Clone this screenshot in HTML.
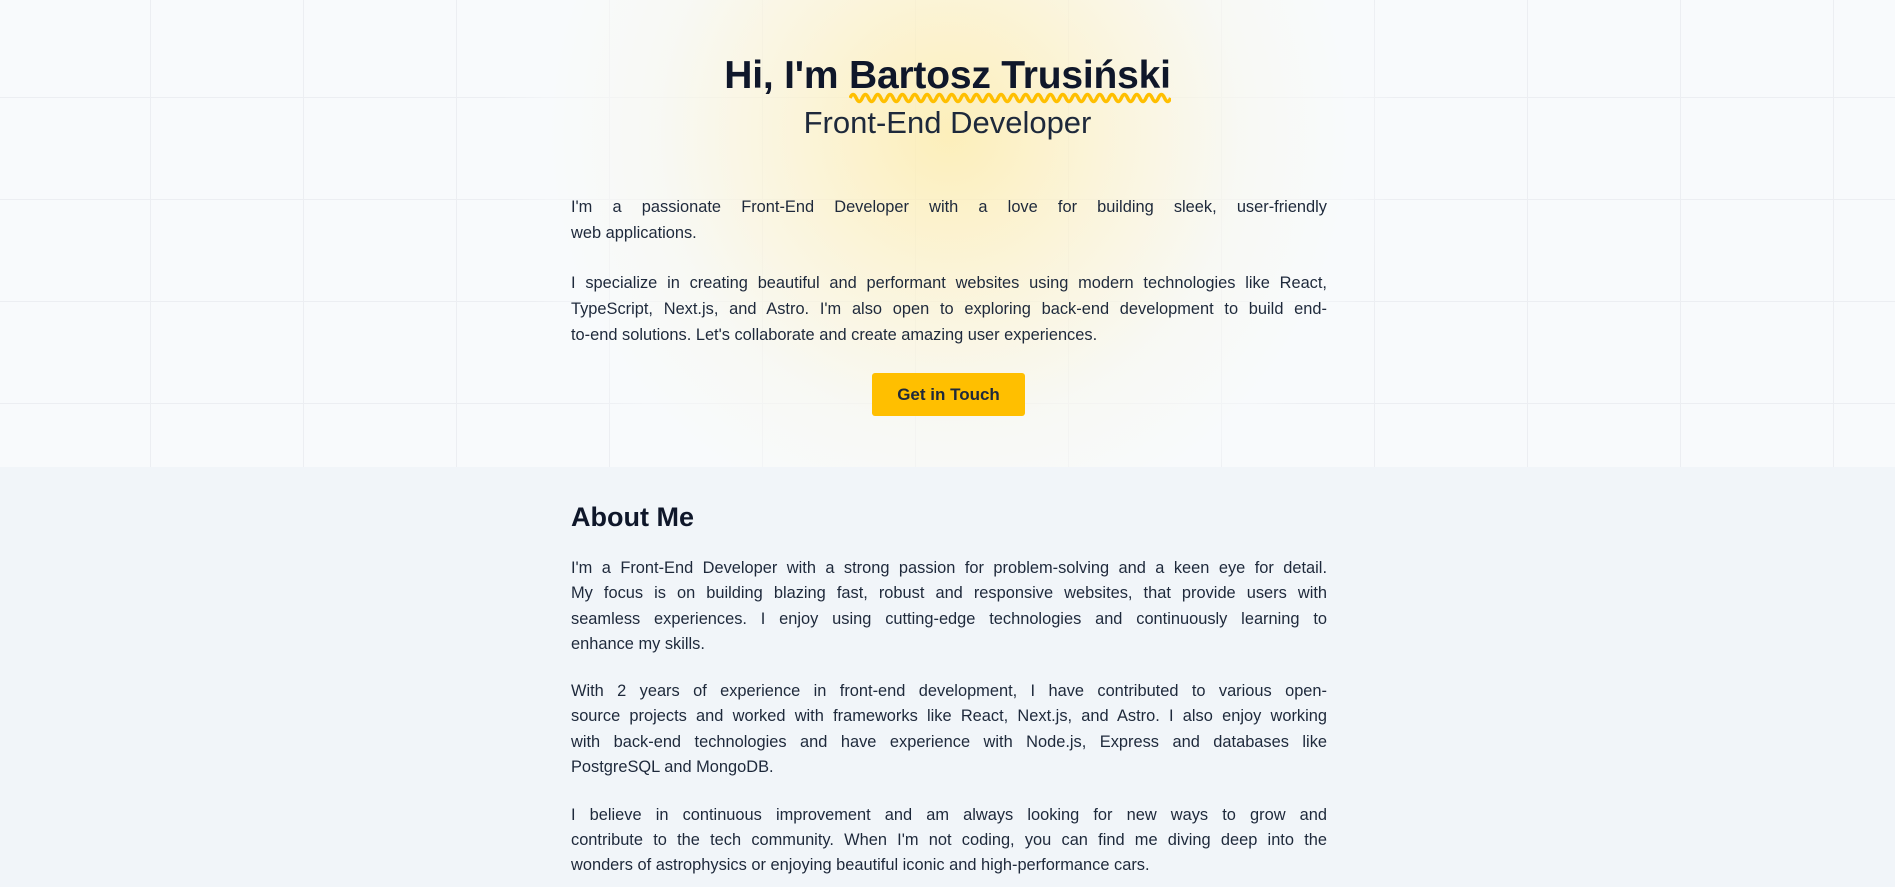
<!DOCTYPE html>
<html><head><meta charset="utf-8"><style>
*{margin:0;padding:0;box-sizing:border-box}
html,body{width:1895px;height:887px;overflow:hidden;background:#f1f5f9;font-family:"Liberation Sans",sans-serif;color:#0f172a}
.hero{position:absolute;left:0;top:0;width:1895px;height:467px;background-color:#f8fafc;
background-image:linear-gradient(#eceef2 1px,transparent 1px),linear-gradient(90deg,#eceef2 1px,transparent 1px);
background-size:153px 102px;background-position:-3px -5px;overflow:hidden}
.glow{position:absolute;left:499px;top:-317px;width:900px;height:900px;border-radius:50%;
background:radial-gradient(closest-side,rgba(254,236,170,0.8),rgba(252,242,205,0.7) 35%,rgba(248,248,240,0.65) 65%,rgba(248,250,252,0.5) 90%,rgba(248,250,252,0) 100%)}
h1{position:absolute;left:0;width:1895px;top:54px;text-align:center;font-size:39px;font-weight:700;letter-spacing:-0.2px}
.sub{position:absolute;left:0;width:1895px;top:105px;text-align:center;font-size:31px;color:#1e293b}
.ln{position:absolute;left:571px;width:756px;font-size:16.4px;color:#1e293b;text-align:justify;text-align-last:justify;white-space:nowrap;line-height:20px}
.ln.l{text-align-last:left}
.btn{position:absolute;left:872px;top:373px;width:153px;height:43px;background:#ffbf00;border-radius:3px;font-size:17px;font-weight:700;color:#1e293b;text-align:center;line-height:43px}
h2{position:absolute;left:571px;top:502px;font-size:27px;font-weight:700}
</style></head><body>
<div class="hero"><div class="glow"></div></div>
<h1>Hi, I'm <span style="position:relative">Bartosz Trusiński<svg style="position:absolute;left:0;top:37px" width="100%" height="14" viewBox="0 0 326 14" preserveAspectRatio="none"><path d="M1 7 q3.1 -7 6.25 0 t6.25 0 t6.25 0 t6.25 0 t6.25 0 t6.25 0 t6.25 0 t6.25 0 t6.25 0 t6.25 0 t6.25 0 t6.25 0 t6.25 0 t6.25 0 t6.25 0 t6.25 0 t6.25 0 t6.25 0 t6.25 0 t6.25 0 t6.25 0 t6.25 0 t6.25 0 t6.25 0 t6.25 0 t6.25 0 t6.25 0 t6.25 0 t6.25 0 t6.25 0 t6.25 0 t6.25 0 t6.25 0 t6.25 0 t6.25 0 t6.25 0 t6.25 0 t6.25 0 t6.25 0 t6.25 0 t6.25 0 t6.25 0 t6.25 0 t6.25 0 t6.25 0 t6.25 0 t6.25 0 t6.25 0 t6.25 0 t6.25 0 t6.25 0 t6.25 0" fill="none" stroke="#ffbf00" stroke-width="3.5"/></svg></span></h1>
<div class="sub">Front-End Developer</div>

<div class="ln" style="top:197px">I'm a passionate Front-End Developer with a love for building sleek, user-friendly</div>
<div class="ln l" style="top:223px">web applications.</div>
<div class="ln" style="top:273px">I specialize in creating beautiful and performant websites using modern technologies like React,</div>
<div class="ln" style="top:299px">TypeScript, Next.js, and Astro. I'm also open to exploring back-end development to build end-</div>
<div class="ln l" style="top:325px">to-end solutions. Let's collaborate and create amazing user experiences.</div>
<div class="btn">Get in Touch</div>

<h2>About Me</h2>
<div class="ln" style="top:558px">I'm a Front-End Developer with a strong passion for problem-solving and a keen eye for detail.</div>
<div class="ln" style="top:583px">My focus is on building blazing fast, robust and responsive websites, that provide users with</div>
<div class="ln" style="top:609px">seamless experiences. I enjoy using cutting-edge technologies and continuously learning to</div>
<div class="ln l" style="top:634px">enhance my skills.</div>
<div class="ln" style="top:681px">With 2 years of experience in front-end development, I have contributed to various open-</div>
<div class="ln" style="top:706px">source projects and worked with frameworks like React, Next.js, and Astro. I also enjoy working</div>
<div class="ln" style="top:732px">with back-end technologies and have experience with Node.js, Express and databases like</div>
<div class="ln l" style="top:757px">PostgreSQL and MongoDB.</div>
<div class="ln" style="top:805px">I believe in continuous improvement and am always looking for new ways to grow and</div>
<div class="ln" style="top:830px">contribute to the tech community. When I'm not coding, you can find me diving deep into the</div>
<div class="ln l" style="top:855px">wonders of astrophysics or enjoying beautiful iconic and high-performance cars.</div>
</body></html>
